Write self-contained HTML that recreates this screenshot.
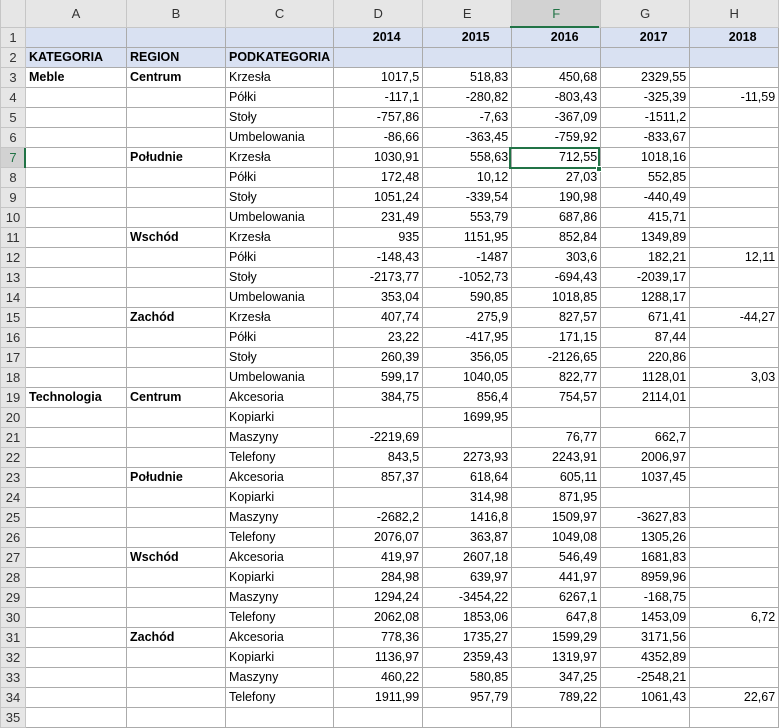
<!DOCTYPE html>
<html><head><meta charset="utf-8"><style>
body{margin:0;background:#fff;width:780px;height:714px;overflow:hidden;font-family:"Liberation Sans",Arial,sans-serif;font-size:12.5px;color:#000;position:relative}
table{border-collapse:collapse;table-layout:fixed;position:absolute;left:0;top:0}
td{height:19px;padding:0 3px;border:1px solid #ababab;white-space:nowrap;overflow:hidden;line-height:19px}
td.n{text-align:right}
td.h{background:#e6e6e6;text-align:center;color:#333;border-color:#c6c6c6;font-size:13px}
tr.top td{height:27px;background:#e6e6e6;text-align:center;color:#333;border-color:#c6c6c6;border-top:none;vertical-align:middle;font-size:13px}
tr.b td{background:#d9e1f2;font-weight:bold}
tr.b td.h{background:#e6e6e6;font-weight:normal}
tr.b td.n{text-align:center;padding-left:20px}
b{font-weight:bold}
td.sel{background:#d2d2d2 !important;color:#217346 !important}
.s{position:absolute;box-sizing:border-box}
</style></head><body>
<table>
<colgroup><col style="width:25px"><col style="width:101px"><col style="width:99px"><col style="width:106px"><col style="width:89px"><col style="width:89px"><col style="width:89px"><col style="width:89px"><col style="width:89px"></colgroup>
<tr class="top"><td style="background:#e6e6e6"></td><td>A</td><td>B</td><td>C</td><td>D</td><td>E</td><td class="sel">F</td><td>G</td><td>H</td></tr>
<tr class="b"><td class="h">1</td><td></td><td></td><td></td><td class="n">2014</td><td class="n">2015</td><td class="n">2016</td><td class="n">2017</td><td class="n">2018</td></tr>
<tr class="b"><td class="h">2</td><td>KATEGORIA</td><td>REGION</td><td>PODKATEGORIA</td><td></td><td></td><td></td><td></td><td></td></tr>
<tr><td class="h">3</td><td><b>Meble</b></td><td><b>Centrum</b></td><td>Krzesła</td><td class="n">1017,5</td><td class="n">518,83</td><td class="n">450,68</td><td class="n">2329,55</td><td class="n"></td></tr>
<tr><td class="h">4</td><td></td><td></td><td>Półki</td><td class="n">-117,1</td><td class="n">-280,82</td><td class="n">-803,43</td><td class="n">-325,39</td><td class="n">-11,59</td></tr>
<tr><td class="h">5</td><td></td><td></td><td>Stoły</td><td class="n">-757,86</td><td class="n">-7,63</td><td class="n">-367,09</td><td class="n">-1511,2</td><td class="n"></td></tr>
<tr><td class="h">6</td><td></td><td></td><td>Umbelowania</td><td class="n">-86,66</td><td class="n">-363,45</td><td class="n">-759,92</td><td class="n">-833,67</td><td class="n"></td></tr>
<tr><td class="h sel">7</td><td></td><td><b>Południe</b></td><td>Krzesła</td><td class="n">1030,91</td><td class="n">558,63</td><td class="n">712,55</td><td class="n">1018,16</td><td class="n"></td></tr>
<tr><td class="h">8</td><td></td><td></td><td>Półki</td><td class="n">172,48</td><td class="n">10,12</td><td class="n">27,03</td><td class="n">552,85</td><td class="n"></td></tr>
<tr><td class="h">9</td><td></td><td></td><td>Stoły</td><td class="n">1051,24</td><td class="n">-339,54</td><td class="n">190,98</td><td class="n">-440,49</td><td class="n"></td></tr>
<tr><td class="h">10</td><td></td><td></td><td>Umbelowania</td><td class="n">231,49</td><td class="n">553,79</td><td class="n">687,86</td><td class="n">415,71</td><td class="n"></td></tr>
<tr><td class="h">11</td><td></td><td><b>Wschód</b></td><td>Krzesła</td><td class="n">935</td><td class="n">1151,95</td><td class="n">852,84</td><td class="n">1349,89</td><td class="n"></td></tr>
<tr><td class="h">12</td><td></td><td></td><td>Półki</td><td class="n">-148,43</td><td class="n">-1487</td><td class="n">303,6</td><td class="n">182,21</td><td class="n">12,11</td></tr>
<tr><td class="h">13</td><td></td><td></td><td>Stoły</td><td class="n">-2173,77</td><td class="n">-1052,73</td><td class="n">-694,43</td><td class="n">-2039,17</td><td class="n"></td></tr>
<tr><td class="h">14</td><td></td><td></td><td>Umbelowania</td><td class="n">353,04</td><td class="n">590,85</td><td class="n">1018,85</td><td class="n">1288,17</td><td class="n"></td></tr>
<tr><td class="h">15</td><td></td><td><b>Zachód</b></td><td>Krzesła</td><td class="n">407,74</td><td class="n">275,9</td><td class="n">827,57</td><td class="n">671,41</td><td class="n">-44,27</td></tr>
<tr><td class="h">16</td><td></td><td></td><td>Półki</td><td class="n">23,22</td><td class="n">-417,95</td><td class="n">171,15</td><td class="n">87,44</td><td class="n"></td></tr>
<tr><td class="h">17</td><td></td><td></td><td>Stoły</td><td class="n">260,39</td><td class="n">356,05</td><td class="n">-2126,65</td><td class="n">220,86</td><td class="n"></td></tr>
<tr><td class="h">18</td><td></td><td></td><td>Umbelowania</td><td class="n">599,17</td><td class="n">1040,05</td><td class="n">822,77</td><td class="n">1128,01</td><td class="n">3,03</td></tr>
<tr><td class="h">19</td><td><b>Technologia</b></td><td><b>Centrum</b></td><td>Akcesoria</td><td class="n">384,75</td><td class="n">856,4</td><td class="n">754,57</td><td class="n">2114,01</td><td class="n"></td></tr>
<tr><td class="h">20</td><td></td><td></td><td>Kopiarki</td><td class="n"></td><td class="n">1699,95</td><td class="n"></td><td class="n"></td><td class="n"></td></tr>
<tr><td class="h">21</td><td></td><td></td><td>Maszyny</td><td class="n">-2219,69</td><td class="n"></td><td class="n">76,77</td><td class="n">662,7</td><td class="n"></td></tr>
<tr><td class="h">22</td><td></td><td></td><td>Telefony</td><td class="n">843,5</td><td class="n">2273,93</td><td class="n">2243,91</td><td class="n">2006,97</td><td class="n"></td></tr>
<tr><td class="h">23</td><td></td><td><b>Południe</b></td><td>Akcesoria</td><td class="n">857,37</td><td class="n">618,64</td><td class="n">605,11</td><td class="n">1037,45</td><td class="n"></td></tr>
<tr><td class="h">24</td><td></td><td></td><td>Kopiarki</td><td class="n"></td><td class="n">314,98</td><td class="n">871,95</td><td class="n"></td><td class="n"></td></tr>
<tr><td class="h">25</td><td></td><td></td><td>Maszyny</td><td class="n">-2682,2</td><td class="n">1416,8</td><td class="n">1509,97</td><td class="n">-3627,83</td><td class="n"></td></tr>
<tr><td class="h">26</td><td></td><td></td><td>Telefony</td><td class="n">2076,07</td><td class="n">363,87</td><td class="n">1049,08</td><td class="n">1305,26</td><td class="n"></td></tr>
<tr><td class="h">27</td><td></td><td><b>Wschód</b></td><td>Akcesoria</td><td class="n">419,97</td><td class="n">2607,18</td><td class="n">546,49</td><td class="n">1681,83</td><td class="n"></td></tr>
<tr><td class="h">28</td><td></td><td></td><td>Kopiarki</td><td class="n">284,98</td><td class="n">639,97</td><td class="n">441,97</td><td class="n">8959,96</td><td class="n"></td></tr>
<tr><td class="h">29</td><td></td><td></td><td>Maszyny</td><td class="n">1294,24</td><td class="n">-3454,22</td><td class="n">6267,1</td><td class="n">-168,75</td><td class="n"></td></tr>
<tr><td class="h">30</td><td></td><td></td><td>Telefony</td><td class="n">2062,08</td><td class="n">1853,06</td><td class="n">647,8</td><td class="n">1453,09</td><td class="n">6,72</td></tr>
<tr><td class="h">31</td><td></td><td><b>Zachód</b></td><td>Akcesoria</td><td class="n">778,36</td><td class="n">1735,27</td><td class="n">1599,29</td><td class="n">3171,56</td><td class="n"></td></tr>
<tr><td class="h">32</td><td></td><td></td><td>Kopiarki</td><td class="n">1136,97</td><td class="n">2359,43</td><td class="n">1319,97</td><td class="n">4352,89</td><td class="n"></td></tr>
<tr><td class="h">33</td><td></td><td></td><td>Maszyny</td><td class="n">460,22</td><td class="n">580,85</td><td class="n">347,25</td><td class="n">-2548,21</td><td class="n"></td></tr>
<tr><td class="h">34</td><td></td><td></td><td>Telefony</td><td class="n">1911,99</td><td class="n">957,79</td><td class="n">789,22</td><td class="n">1061,43</td><td class="n">22,67</td></tr>
<tr><td class="h">35</td><td></td><td></td><td></td><td class="n"></td><td class="n"></td><td class="n"></td><td class="n"></td><td class="n"></td></tr>
</table>
<div class="s" style="left:510px;top:26px;width:89px;height:2px;background:#217346"></div>
<div class="s" style="left:24px;top:148px;width:2px;height:20px;background:#217346"></div>
<div class="s" style="left:509px;top:147px;width:91px;height:22px;border:2px solid #217346"></div>
<div class="s" style="left:596px;top:166px;width:6px;height:6px;background:#217346;border:1px solid #fff"></div>
</body></html>
